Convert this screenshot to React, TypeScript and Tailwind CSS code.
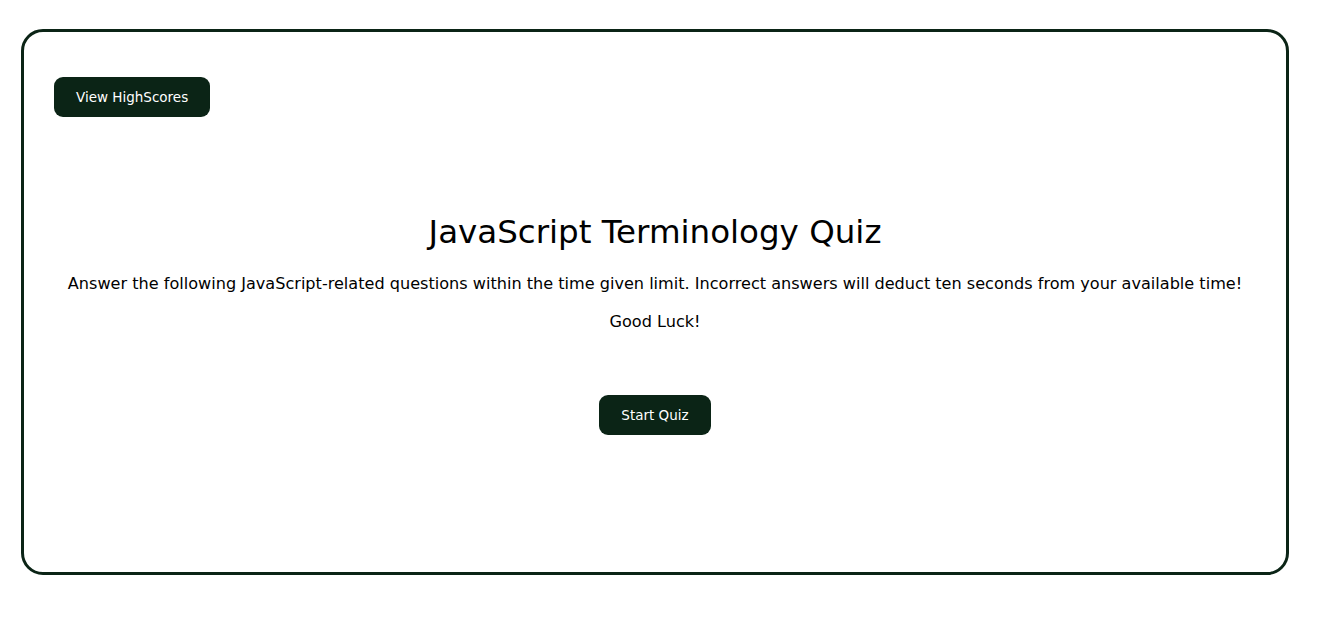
export default function App() {
  return (
    <div className="min-h-screen bg-white text-black">
      <div className="ml-[21px] mt-[29px] w-[1268px] h-[546px] rounded-[22px] border-[3px] border-[#0b2416] font-['DejaVu_Sans',Verdana,sans-serif]">
        <div className="pl-[30px] pt-[45px]">
          <button className="h-[40px] px-[22px] rounded-[9px] bg-[#0b2416] text-white text-[13.5px]">
            View HighScores
          </button>
        </div>

        <div className="flex flex-col items-center text-center mt-[95px]">
          <h1 className="text-[32.5px] leading-[40px]">JavaScript Terminology Quiz</h1>
          <p className="mt-[21px] text-[16.1px] leading-[22px]">
            Answer the following JavaScript-related questions within the time given limit. Incorrect answers will deduct ten seconds from your available time!
          </p>
          <p className="mt-[16px] text-[16.1px] leading-[22px]">Good Luck!</p>
          <button className="mt-[62px] h-[40px] px-[22px] rounded-[9px] bg-[#0b2416] text-white text-[13.5px]">
            Start Quiz
          </button>
        </div>
      </div>
    </div>
  );
}
